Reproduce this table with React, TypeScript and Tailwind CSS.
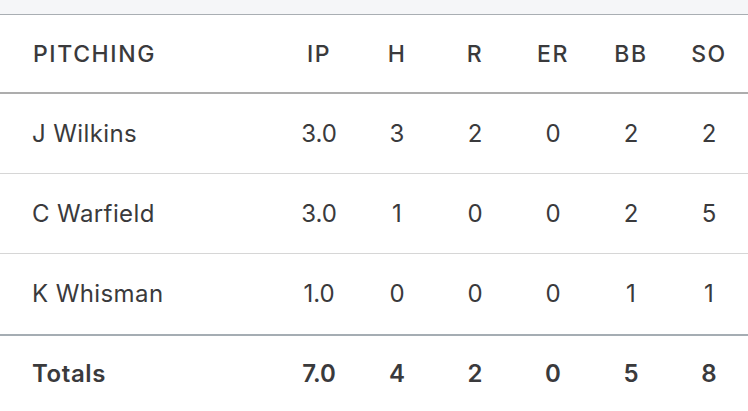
import React from 'react';

type Line = { name: string; ip: string; h: number; r: number; er: number; bb: number; so: number };

const pitchers: Line[] = [
  { name: 'J Wilkins', ip: '3.0', h: 3, r: 2, er: 0, bb: 2, so: 2 },
  { name: 'C Warfield', ip: '3.0', h: 1, r: 0, er: 0, bb: 2, so: 5 },
  { name: 'K Whisman', ip: '1.0', h: 0, r: 0, er: 0, bb: 1, so: 1 },
];

const cols = ['IP', 'H', 'R', 'ER', 'BB', 'SO'];

const App: React.FC = () => {
  const totals = ['7.0', '4', '2', '0', '5', '8'];

  return (
    <div className="w-[748px] h-[411px] overflow-hidden bg-white text-[#3a3a3c] font-['Inter',sans-serif]">
      {/* top strip */}
      <div className="h-[15px] bg-[#f5f6f8] border-b border-[#a9aeb3]" />

      {/* Header */}
      <div className="flex items-center h-[79px] pt-[2px] border-b-2 border-[#adadad] text-[23px] font-medium tracking-[1.6px]">
        <div className="w-[280px] pl-[33px]">PITCHING</div>
        {cols.map(c => (
          <div key={c} className="w-[78px] text-center">{c}</div>
        ))}
      </div>

      {/* Rows */}
      {pitchers.map((p, i) => (
        <div
          key={p.name}
          className={`flex items-center text-[24px] ${i < 2 ? 'h-[80px] border-b border-[#d6d6d6]' : 'h-[80px]'}`}
        >
          <div className="w-[280px] pl-[32px] tracking-[0.4px]">{p.name}</div>
          {[p.ip, p.h, p.r, p.er, p.bb, p.so].map((v, j) => (
            <div key={j} className="w-[78px] text-center">{v}</div>
          ))}
        </div>
      ))}

      {/* Totals */}
      <div className="flex items-center h-[78px] border-t-2 border-[#a5adb3] text-[24px] font-semibold">
        <div className="w-[280px] pl-[32px] tracking-[0.6px]">Totals</div>
        {totals.map((v, j) => (
          <div key={j} className="w-[78px] text-center">{v}</div>
        ))}
      </div>
    </div>
  );
};

export default App;
